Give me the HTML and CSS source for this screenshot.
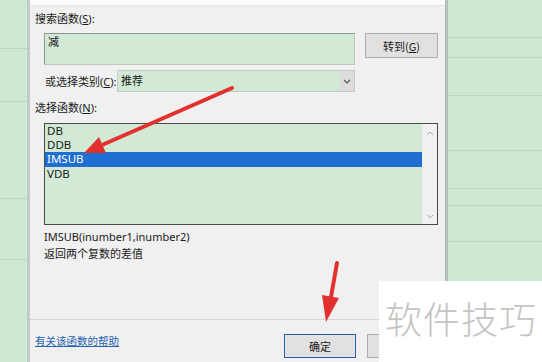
FILE: index.html
```html
<!DOCTYPE html>
<html lang="zh">
<head>
  <meta charset="UTF-8">
  <title>插入函数</title>
  <link rel="stylesheet" href="styles.css">
</head>
<body>

  <!-- 左侧表格 -->
  <div class="sheet sheet-left">
    <div class="row" style="height:48px"></div>
    <div class="row" style="height:52px"></div>
    <div class="row" style="height:96px"></div>
    <div class="row" style="height:60px"></div>
  </div>

  <!-- 插入函数对话框 -->
  <div class="dialog">
    <div class="dialog-top"></div>

    <div class="label">搜索函数(<u>S</u>):</div>
    <div class="search-row">
      <div class="search-box">减</div>
      <button class="btn goto">转到(<u>G</u>)</button>
    </div>

    <div class="category-row">
      <span class="cat-label">或选择类别(<u>C</u>):</span>
      <div class="select">
        <span class="select-text">推荐</span>
        <span class="select-arrow">
          <svg width="8" height="5" viewBox="0 0 8 5"><path d="M1 1 L4 4 L7 1" fill="none" stroke="#555" stroke-width="1.2"/></svg>
        </span>
      </div>
    </div>

    <div class="label label-list">选择函数(<u>N</u>):</div>
    <div class="list">
      <ul class="items">
        <li>DB</li>
        <li>DDB</li>
        <li class="selected">IMSUB</li>
        <li>VDB</li>
      </ul>
      <div class="scrollbar">
        <svg width="8" height="5" viewBox="0 0 8 5"><path d="M1 4 L4 1 L7 4" fill="none" stroke="#aaa" stroke-width="1"/></svg>
        <svg width="8" height="5" viewBox="0 0 8 5"><path d="M1 1 L4 4 L7 1" fill="none" stroke="#aaa" stroke-width="1"/></svg>
      </div>
    </div>

    <div class="syntax">IMSUB(inumber1,inumber2)</div>
    <div class="desc">返回两个复数的差值</div>

    <div class="footer">
      <a href="#" class="help">有关该函数的帮助</a>
      <div class="buttons">
        <button class="btn ok">确定</button>
        <button class="btn"></button>
      </div>
    </div>
  </div>

  <!-- 右侧表格 -->
  <div class="sheet sheet-right">
    <div class="row" style="height:37px"></div>
    <div class="row" style="height:19px"></div>
    <div class="row" style="height:37px"></div>
    <div class="row" style="height:54px"></div>
    <div class="row" style="height:37px"></div>
    <div class="row" style="height:16px"></div>
    <div class="row" style="height:35px"></div>
  </div>

  <!-- 红色箭头 -->
  <svg class="arrows" width="542" height="362" viewBox="0 0 542 362">
    <line x1="232" y1="88" x2="102" y2="145" stroke="#e2302f" stroke-width="4" stroke-linecap="round"/>
    <polygon points="84,153 106,153 99,137" fill="#e2302f"/>
    <line x1="337" y1="263" x2="331" y2="297" stroke="#e2302f" stroke-width="4" stroke-linecap="round"/>
    <polygon points="326,322 339,298 322,295" fill="#e2302f"/>
  </svg>

  <!-- 水印 -->
  <div class="watermark">软件技巧</div>

</body>
</html>
```

FILE: styles.css
```css
/* 基本样式 */
body {
  margin: 0;
  width: 542px;
  height: 362px;
  overflow: hidden;
  display: flex;
  position: relative;
  font-family: "Noto Sans", "Noto Sans CJK SC", sans-serif;
  font-size: 11px;
  color: #1a1a1a;
  background: #cfe8d3;
}

/* 表格背景 */
.sheet {
  background: #cfe8d3;
  display: flex;
  flex-direction: column;
}

.sheet .row {
  border-bottom: 1px solid #bcd8c2;
}

.sheet-left {
  width: 27px;
  border-right: 3px solid #c3ccc5;
}

.sheet-right {
  flex: 1;
  border-left: 3px solid #b5beb7;
  height: 281px;
}

/* 对话框 */
.dialog {
  width: 415px;
  background: #f0f0f0;
  display: flex;
  flex-direction: column;
}

.dialog-top {
  height: 5px;
  background: #fbfbfb;
  border-bottom: 1px solid #e4e4e4;
}

.label {
  margin: 5px 0 0 5px;
  line-height: 16px;
}

.search-row {
  display: flex;
  align-items: flex-start;
  gap: 10px;
  margin: 6px 0 0 14px;
}

.search-box {
  width: 306px;
  height: 29px;
  background: #d1e9d5;
  border: 1px solid #bfc9c1;
  border-top-color: #8e968f;
  border-left-color: #8e968f;
  padding: 1px 0 0 3px;
  line-height: 14px;
}

.btn {
  font-family: "Noto Sans CJK SC", sans-serif;
  font-size: 11px;
  color: #1a1a1a;
  background: #e1e1e1;
  border: 1px solid #adadad;
  width: 73px;
  height: 25px;
  padding: 0;
}

.category-row {
  display: flex;
  align-items: center;
  margin: 5px 0 0 15px;
}

.cat-label {
  width: 72px;
}

.select {
  width: 236px;
  height: 20px;
  display: flex;
  background: #d1e9d5;
  border: 1px solid #c4cdc6;
}

.select-text {
  flex: 1;
  padding-left: 3px;
  line-height: 20px;
}

.select-arrow {
  width: 15px;
  background: #dcdcdc;
  display: flex;
  align-items: center;
  justify-content: center;
}

.label-list {
  margin-top: 8px;
}

/* 函数列表 */
.list {
  margin: 7px 0 0 14px;
  width: 392px;
  height: 100px;
  border: 1px solid #4a4a4a;
  display: flex;
}

.items {
  flex: 1;
  margin: 0;
  padding: 0;
  list-style: none;
  background: #d1e9d5;
  font-size: 11.5px;
}

.items li {
  height: 14px;
  line-height: 14px;
  padding-left: 2px;
}

.items li.selected {
  height: 15px;
  background: #1f6ed1;
  color: #fff;
}

.scrollbar {
  width: 15px;
  background: #f0f0f2;
  display: flex;
  flex-direction: column;
  justify-content: space-between;
  align-items: center;
  padding: 7px 0 5px;
}

.syntax {
  margin: 4px 0 0 14px;
  line-height: 16px;
}

.desc {
  margin: 1px 0 0 14px;
  line-height: 16px;
}

/* 底部 */
.footer {
  margin-top: auto;
  height: 42px;
  border-top: 1px solid #d6d6d6;
  display: flex;
  align-items: flex-start;
  justify-content: space-between;
}

.help {
  margin: 14px 0 0 5px;
  color: #2463b0;
  font-size: 10.5px;
  line-height: 14px;
}

.buttons {
  display: flex;
  gap: 11px;
  margin: 14px 6px 0 0;
}

.buttons .btn {
  width: 72px;
  height: 24px;
}

.btn.ok {
  border-color: #2a5d9e;
  box-shadow: inset 0 0 0 1px #dfe6f0;
}

/* 覆盖层 */
.arrows {
  position: absolute;
  left: 0;
  top: 0;
  pointer-events: none;
}

.watermark {
  position: absolute;
  left: 379px;
  top: 281px;
  width: 163px;
  height: 81px;
  background: #fff;
  color: #c4c4c4;
  font-family: "Noto Sans CJK SC", sans-serif;
  font-weight: 300;
  font-size: 37px;
  line-height: 74px;
  padding-left: 6px;
  box-sizing: border-box;
  letter-spacing: 1px;
}
```
